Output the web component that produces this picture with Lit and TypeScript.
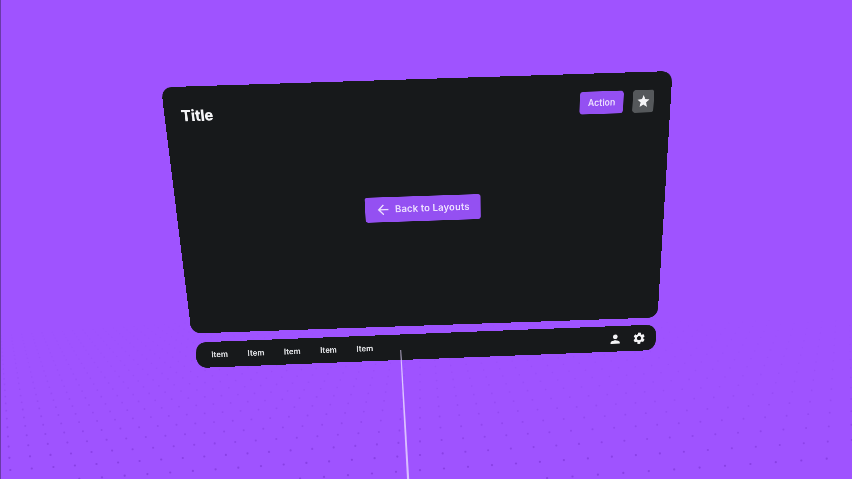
import { LitElement, html, css, svg } from "lit";
import { customElement } from "lit/decorators.js";

type Pt = [number, number];

// Matrix mapping a w×h local box on to the on-screen quad tl,tr,br,bl.
function quadMatrix(w: number, h: number, q: [Pt, Pt, Pt, Pt]): string {
  const [[x0, y0], [x1, y1], [x2, y2], [x3, y3]] = q;
  const dx1 = x1 - x2, dx2 = x3 - x2, sx = x0 - x1 + x2 - x3;
  const dy1 = y1 - y2, dy2 = y3 - y2, sy = y0 - y1 + y2 - y3;
  const det = dx1 * dy2 - dx2 * dy1;
  const g = (sx * dy2 - dx2 * sy) / det;
  const k = (dx1 * sy - sx * dy1) / det;
  const a = x1 - x0 + g * x1, b = x3 - x0 + k * x3;
  const d = y1 - y0 + g * y1, e = y3 - y0 + k * y3;
  return `matrix3d(${a / w},${d / w},0,${g / w},${b / h},${e / h},0,${k / h},0,0,1,0,${x0},${y0},0,1)`;
}

const PANEL: [Pt, Pt, Pt, Pt] = [[161, 87.3], [672.5, 71], [657.5, 317.5], [191.5, 333.5]];
const BAR: [Pt, Pt, Pt, Pt] = [[195.5, 342.5], [656.5, 324.5], [655.5, 350], [197, 368]];

const VX = 420, VY = 185, H = 5076, K = 427, ROLL = -0.07;

function floorDots() {
  const dots = [];
  for (let j = 16; j < 42; j++) {
    const y = VY + H / (j + 0.8);
    for (let i = -60; i <= 60; i++) {
      const x = VX + i * K * (y - VY) / H;
      const py = y + ROLL * (x - VX);
      if (x < 0 || x > 852 || py < 320 || py > 479) continue;
      const t = Math.min(1, Math.max(0, (py - 320) / 140));
      dots.push(svg`<circle cx=${x.toFixed(1)} cy=${py.toFixed(1)} r=${(0.55 + 0.55 * t).toFixed(2)} opacity=${(0.03 + 0.5 * t * t + 0.12 * t).toFixed(2)}></circle>`);
    }
  }
  return dots;
}

@customElement("app-root")
export class AppRoot extends LitElement {
  static styles = css`
    :host { display: block; width: 852px; height: 479px; overflow: hidden; font-family: Inter, "Liberation Sans", sans-serif; }
    .stage { position: relative; width: 852px; height: 479px; background: #9f53ff; overflow: hidden; filter: blur(0.5px); }
    .floor { position: absolute; left: 0; top: 0; width: 852px; height: 479px; fill: #7c35d6; }
    .laser { position: absolute; left: 0; top: 0; width: 852px; height: 479px; }
    .panel, .bar { position: absolute; left: 0; top: 0; transform-origin: 0 0; background: #17191b; box-sizing: border-box; }
    .panel { width: 980px; height: 492px; border-radius: 20px; display: flex; flex-direction: column; }
    .header { display: flex; align-items: center; justify-content: space-between; padding: 33px 33px 0 32px; }
    .title { font-size: 28px; font-weight: 800; color: #f4f4f6; letter-spacing: -0.2px; }
    .actions { display: flex; align-items: center; gap: 18px; }
    .action { display: flex; align-items: center; justify-content: center; width: 85px; height: 42px; border-radius: 6px; background: #9450f2; color: #ecdfff; font-size: 17px; font-weight: 600; }
    .star { display: flex; align-items: center; justify-content: center; width: 41px; height: 42px; border-radius: 5px; background: #55585b; }
    .star svg { width: 28px; height: 28px; fill: #f4f4f6; }
    .body { flex: 1; display: flex; align-items: center; justify-content: center; padding: 0 0 74px 6px; }
    .back { display: flex; align-items: center; gap: 8px; height: 50px; padding: 0 22px 0 20px; border-radius: 5px; background: #9450f2; color: #ecdfff; font-size: 19px; font-weight: 600; letter-spacing: 0.3px; }
    .back svg { width: 32px; height: 32px; fill: #ecdfff; }
    .bar { width: 922px; height: 51px; border-radius: 20px; display: flex; align-items: center; justify-content: space-between; padding: 0 20px 0 30px; }
    .items { display: flex; }
    .item { width: 72.6px; color: #dcdde0; font-size: 15.5px; font-weight: 700; }
    .icons { display: flex; align-items: center; gap: 20px; }
    .icons svg { width: 28px; height: 28px; fill: #f4f4f6; }
    .edge { position: absolute; left: 0; top: 0; width: 1px; height: 479px; background: #6a3aa8; }
  `;

  render() {
    return html`<div class="stage">
      <svg class="floor" viewBox="0 0 852 479">${floorDots()}</svg>
      <div class="panel" style="transform:${quadMatrix(980, 492, PANEL)}">
        <div class="header">
          <div class="title">Title</div>
          <div class="actions">
            <div class="action">Action</div>
            <div class="star"><svg viewBox="0 0 24 24"><path d="M12 17.27 18.18 21l-1.64-7.03L22 9.24l-7.19-.61L12 2 9.19 8.63 2 9.24l5.46 4.73L5.82 21z"/></svg></div>
          </div>
        </div>
        <div class="body">
          <div class="back"><svg viewBox="0 0 24 24"><path d="M20 11H7.83l5.59-5.59L12 4l-8 8 8 8 1.41-1.41L7.83 13H20z"/></svg>Back to Layouts</div>
        </div>
      </div>
      <div class="bar" style="transform:${quadMatrix(922, 51, BAR)}">
        <div class="items">
          ${[1, 2, 3, 4, 5].map(() => html`<div class="item">Item</div>`)}
        </div>
        <div class="icons">
          <svg viewBox="0 0 24 24"><path d="M12 12c2.21 0 4-1.79 4-4s-1.79-4-4-4-4 1.79-4 4 1.79 4 4 4zm0 2c-2.67 0-8 1.34-8 4v2h16v-2c0-2.66-5.33-4-8-4z"/></svg>
          <svg viewBox="0 0 24 24"><path d="M19.14 12.94c.04-.3.06-.61.06-.94 0-.32-.02-.64-.07-.94l2.03-1.58a.49.49 0 0 0 .12-.61l-1.92-3.32a.488.488 0 0 0-.59-.22l-2.39.96c-.5-.38-1.03-.7-1.62-.94l-.36-2.54a.484.484 0 0 0-.48-.41h-3.84c-.24 0-.43.17-.47.41l-.36 2.54c-.59.24-1.13.57-1.62.94l-2.39-.96c-.22-.08-.47 0-.59.22L2.74 8.87c-.12.21-.08.47.12.61l2.03 1.58c-.05.3-.09.63-.09.94s.02.64.07.94l-2.03 1.58a.49.49 0 0 0-.12.61l1.92 3.32c.12.22.37.29.59.22l2.39-.96c.5.38 1.03.7 1.62.94l.36 2.54c.05.24.24.41.48.41h3.84c.24 0 .44-.17.47-.41l.36-2.54c.59-.24 1.13-.56 1.62-.94l2.39.96c.22.08.47 0 .59-.22l1.92-3.32c.12-.22.07-.47-.12-.61l-2.01-1.58zM12 15.6c-1.98 0-3.6-1.62-3.6-3.6s1.62-3.6 3.6-3.6 3.6 1.62 3.6 3.6-1.62 3.6-3.6 3.6z"/></svg>
        </div>
      </div>
      <svg class="laser" viewBox="0 0 852 479">
        <defs><linearGradient id="lz" x1="0" y1="0" x2="0" y2="1">
          <stop offset="0" stop-color="#e6d6ff" stop-opacity="0.7"/>
          <stop offset="0.15" stop-color="#e6d6ff" stop-opacity="0.9"/>
          <stop offset="1" stop-color="#e3ceff" stop-opacity="0.85"/>
        </linearGradient></defs>
        <polygon points="400.2,350 401.2,350 409.2,479 407,479" fill="url(#lz)"></polygon>
      </svg>
      <div class="edge"></div>
    </div>`;
  }
}
